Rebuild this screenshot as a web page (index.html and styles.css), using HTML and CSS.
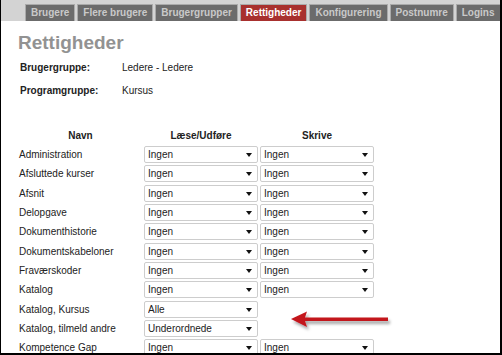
FILE: index.html
```html
<!DOCTYPE html>
<html lang="da">
<head>
    <meta charset="UTF-8">
    <title>Rettigheder</title>
    <link rel="stylesheet" href="styles.css">
</head>
<body>

<div class="page">
    <div class="tabs">
        <div class="tab">Brugere</div>
        <div class="tab">Flere brugere</div>
        <div class="tab">Brugergrupper</div>
        <div class="tab active">Rettigheder</div>
        <div class="tab">Konfigurering</div>
        <div class="tab">Postnumre</div>
        <div class="tab">Logins</div>
    </div>

    <h1 class="title">Rettigheder</h1>

    <table class="info">
        <tr><td class="label">Brugergruppe:</td><td>Ledere - Ledere</td></tr>
        <tr><td class="label">Programgruppe:</td><td>Kursus</td></tr>
    </table>

    <table class="rights">
        <tr><th class="name">Navn</th><th>Læse/Udføre</th><th>Skrive</th></tr>
        <tr><td class="name">Administration</td>
            <td><span class="pick"><select><option>Ingen</option></select></span></td>
            <td><span class="pick"><select><option>Ingen</option></select></span></td></tr>
        <tr><td class="name">Afsluttede kurser</td>
            <td><span class="pick"><select><option>Ingen</option></select></span></td>
            <td><span class="pick"><select><option>Ingen</option></select></span></td></tr>
        <tr><td class="name">Afsnit</td>
            <td><span class="pick"><select><option>Ingen</option></select></span></td>
            <td><span class="pick"><select><option>Ingen</option></select></span></td></tr>
        <tr><td class="name">Delopgave</td>
            <td><span class="pick"><select><option>Ingen</option></select></span></td>
            <td><span class="pick"><select><option>Ingen</option></select></span></td></tr>
        <tr><td class="name">Dokumenthistorie</td>
            <td><span class="pick"><select><option>Ingen</option></select></span></td>
            <td><span class="pick"><select><option>Ingen</option></select></span></td></tr>
        <tr><td class="name">Dokumentskabeloner</td>
            <td><span class="pick"><select><option>Ingen</option></select></span></td>
            <td><span class="pick"><select><option>Ingen</option></select></span></td></tr>
        <tr><td class="name">Fraværskoder</td>
            <td><span class="pick"><select><option>Ingen</option></select></span></td>
            <td><span class="pick"><select><option>Ingen</option></select></span></td></tr>
        <tr><td class="name">Katalog</td>
            <td><span class="pick"><select><option>Ingen</option></select></span></td>
            <td><span class="pick"><select><option>Ingen</option></select></span></td></tr>
        <tr><td class="name">Katalog, Kursus</td>
            <td><span class="pick"><select><option>Alle</option></select></span></td>
            <td></td></tr>
        <tr><td class="name">Katalog, tilmeld andre</td>
            <td><span class="pick"><select><option>Underordnede</option></select></span></td>
            <td></td></tr>
        <tr><td class="name">Kompetence Gap</td>
            <td><span class="pick"><select><option>Ingen</option></select></span></td>
            <td><span class="pick"><select><option>Ingen</option></select></span></td></tr>
    </table>

    <!-- callout arrow -->
    <svg class="callout" width="106" height="26" viewBox="0 0 106 26">
        <defs>
            <filter id="shade" x="-10%" y="-50%" width="130%" height="220%">
                <feDropShadow dx="2" dy="3" stdDeviation="1.5" flood-color="#000" flood-opacity="0.35"/>
            </filter>
        </defs>
        <polygon filter="url(#shade)" fill="#c3161c"
                 points="2,11 18,3.5 16,9.5 99,9.5 99,13 16,13 18,19"/>
    </svg>
</div>

</body>
</html>
```

FILE: styles.css
```css
body {
    margin: 0;
    font-family: "Liberation Sans", Arial, sans-serif;
    font-size: 10px;
    color: #222;
}
.page {
    position: relative;
    width: 502px;
    height: 355px;
    box-sizing: border-box;
    border-left: 1px solid #000;
    border-right: 2px solid #000;
    border-bottom: 2px solid #000;
    overflow: hidden;
}

/* tabs */
.tabs {
    display: flex;
    align-items: flex-end;
    gap: 2px;
    height: 21px;
    padding-left: 24px;
    background: #d3d3d3;
}
.tab {
    height: 17px;
    box-sizing: border-box;
    padding: 0 5px;
    border: 1px solid #aaa;
    border-bottom: none;
    background: #6b6b6b;
    color: #c9c9c9;
    font-weight: bold;
    font-size: 10px;
    line-height: 16px;
    white-space: nowrap;
}
.tab.active {
    background: #a8302e;
    color: #fff;
}

.title {
    margin: 11px 0 0 17px;
    font-size: 19px;
    line-height: 22px;
    font-weight: bold;
    color: #929292;
}

.info {
    margin: 2px 0 0 19px;
    border-collapse: collapse;
}
.info td {
    height: 23px;
    padding: 0;
}
.info .label {
    width: 102px;
    font-weight: bold;
}

.rights {
    margin: 23px 0 0 17px;
    border-collapse: collapse;
    table-layout: fixed;
}
.rights th {
    width: 116px;
    height: 20px;
    padding: 0;
    font-weight: bold;
    text-align: center;
}
.rights th.name { width: 125px; }
.rights td {
    height: 19.33px;
    padding: 0;
    vertical-align: middle;
}
.rights td.name { padding-left: 1px; }

.pick {
    position: relative;
    display: block;
    width: 114px;
    margin-left: 1px;
}
.pick select {
    display: block;
    width: 114px;
    height: 17px;
    margin: 0;
    padding: 0 0 0 3px;
    border: 1px solid #cdcdcd;
    border-radius: 2px;
    background: #fff;
    color: #222;
    font-family: "Liberation Sans", Arial, sans-serif;
    font-size: 10px;
    -webkit-appearance: none;
    appearance: none;
}
.pick::after {
    content: "";
    position: absolute;
    right: 6px;
    top: 7px;
    border-left: 3.5px solid transparent;
    border-right: 3.5px solid transparent;
    border-top: 4px solid #111;
}

.callout {
    position: absolute;
    left: 288px;
    top: 308px;
}
```
